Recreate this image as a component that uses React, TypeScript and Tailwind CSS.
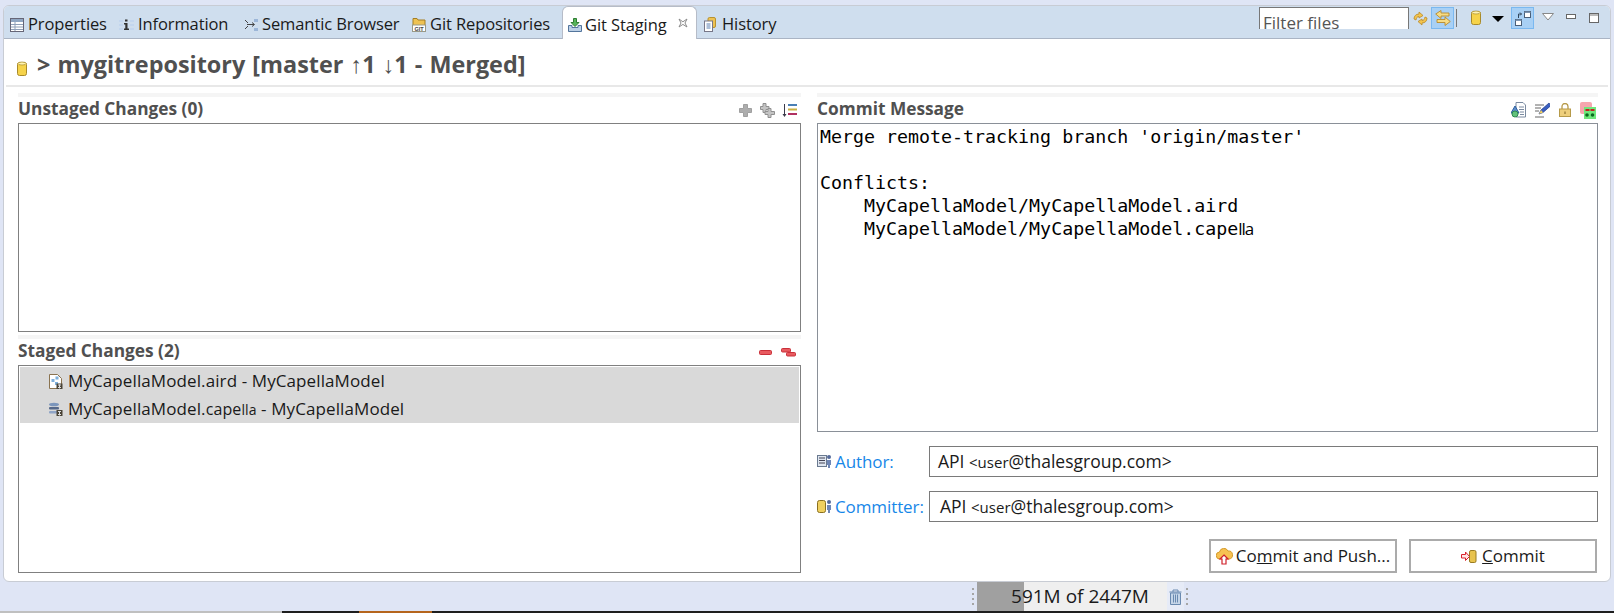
import type { ReactNode } from 'react';

const UI_FONT = "font-['Open_Sans','Noto_Sans',sans-serif]";

function Svg({ w = 16, h = 16, children }: { w?: number; h?: number; children: ReactNode }) {
  return (
    <svg width={w} height={h} viewBox={`0 0 ${w} ${h}`} className="shrink-0">
      {children}
    </svg>
  );
}

function Cylinder({ w = 10, h = 15 }: { w?: number; h?: number }) {
  return (
    <Svg w={w} h={h}>
      <rect x="0.5" y="1.5" width={w - 1} height={h - 2} rx="2" fill="#f6d34a" stroke="#a88a2a" />
      <ellipse cx={w / 2} cy="2.5" rx={w / 2 - 1} ry="1.5" fill="#fff3b0" stroke="#a88a2a" strokeWidth="0.7" />
    </Svg>
  );
}

const PropertiesIcon = () => (
  <Svg w={14} h={14}>
    <rect x="0.5" y="0.5" width="13" height="13" fill="#fff" stroke="#667" />
    <rect x="1" y="1" width="12" height="3" fill="#8fa6c2" />
    <path d="M1 6.500h12M1 9h12M1 11.500h12M5 4v9" stroke="#8fa0b8" />
  </Svg>
);

const InfoIcon = () => (
  <Svg w={15} h={14}>
    <path d="M0 3h4M0 7h4M0 11h4M11 3h4M11 7h4M11 11h4" stroke="#c3d6ee" strokeWidth="2" />
    <path d="M6 1.500h2.500v2H6zM5 5h3.500v5.500H10V12H5v-1.500h1.300V6.500H5z" fill="#333" />
  </Svg>
);

const SemanticIcon = () => (
  <Svg w={14} h={14}>
    <path d="M1 2l3 3M1 11l3-3M3 6.500h7M8 4.500l2.500 2-2.500 2" stroke="#444" fill="none" />
    <rect x="10" y="1" width="4" height="3" fill="#9cb6d8" />
    <rect x="10" y="10" width="4" height="3" fill="#9cb6d8" />
  </Svg>
);

const GitRepoIcon = () => (
  <Svg w={14} h={15}>
    <path d="M1 4V1.500h4L6 3h7v6H1z" fill="#eec253" stroke="#a47e24" />
    <rect x="0.500" y="8" width="13" height="6.500" fill="#fff" stroke="#998" />
    <text x="7" y="13.500" textAnchor="middle" fontSize="5.500" fontWeight="700" fill="#444" fontFamily="Liberation Sans">GIT</text>
  </Svg>
);

const StagingIcon = () => (
  <Svg w={14} h={14}>
    <path d="M0.500 7.500h3.500v2h6v-2h3.500v6H0.500z" fill="#bcd0e6" stroke="#53759c" />
    <path d="M5.500 0.500h3v4h2.500L7 8.500 3 4.500h2.500z" fill="#57b45a" stroke="#2e7d32" />
  </Svg>
);

const HistoryIcon = () => (
  <Svg w={12} h={15}>
    <rect x="4" y="0.500" width="7.500" height="10" rx="1.500" fill="#eec253" stroke="#b8932f" />
    <rect x="0.500" y="4" width="8" height="10.500" fill="#fff" stroke="#778" />
    <path d="M2.500 7h4M2.500 9h4M2.500 11h4" stroke="#5a7fb0" />
  </Svg>
);

const CloseIcon = () => (
  <Svg w={10} h={10}>
    <path d="M1 1l3.900 2.800L9 1 7 5l2 4-4.100-2.600L1 9l2-4z" fill="#fff" stroke="#8a8a8a" />
  </Svg>
);

const SyncIcon = () => (
  <Svg w={15} h={15}>
    <path d="M1 8c0-3 2-5 5-5V1l4 3.500L6 7V5.500C4 5.500 3.500 7 3 9z" fill="#f3c44e" stroke="#b98a2a" strokeWidth="0.800" />
    <path d="M14 7c0 3-2 5-5 5v2l-4-3.500L9 8v1.500c2 0 2.500-1.500 3-3.500z" fill="#f3c44e" stroke="#b98a2a" strokeWidth="0.800" />
  </Svg>
);

const LinkIcon = () => (
  <Svg w={16} h={16}>
    <path d="M14 6H6v2.500L0.700 4 6 0.500V3h8z" fill="#f6dc85" stroke="#b98a2a" strokeWidth="0.900" />
    <path d="M2 9.500h8V7l5.300 4.500L10 15.500V12.500H2z" fill="#f6dc85" stroke="#b98a2a" strokeWidth="0.900" />
  </Svg>
);

const LayoutIcon = () => (
  <Svg w={16} h={15}>
    <rect x="0.500" y="8.500" width="6" height="6" fill="#fff" stroke="#4a5f78" />
    <rect x="0.500" y="8.500" width="6" height="1.500" fill="#7c95b2" />
    <rect x="9.500" y="0.500" width="6" height="6" fill="#fff" stroke="#4a5f78" />
    <rect x="9.500" y="0.500" width="6" height="1.500" fill="#7c95b2" />
    <path d="M3.500 7V3h3M5 1.500L6.500 3 5 4.500" stroke="#33475c" fill="none" />
  </Svg>
);

const PlusIcon = () => (
  <Svg w={13} h={13}>
    <path d="M4.500 0.500h4v4h4v4h-4v4h-4v-4h-4v-4h4z" fill="#adadad" stroke="#a0a0a0" />
  </Svg>
);

const PlusAllIcon = () => (
  <Svg w={15} h={15}>
    <path d="M3 0.500h3v3h3v3H6v3H3v-3H0.500v-3H3z" fill="#c4c4c4" stroke="#909090" />
    <path d="M8 5.500h3v3h3.500v3H11v3H8v-3H5v-3h3z" fill="#c4c4c4" stroke="#909090" />
  </Svg>
);

const SortIcon = () => (
  <Svg w={16} h={15}>
    <path d="M2.500 1v11" stroke="#3a3a4a" />
    <path d="M0.500 11h4L2.500 14z" fill="#3a3a4a" />
    <path d="M6 2h9" stroke="#4a7fb5" strokeWidth="2" />
    <path d="M6 6.500h9" stroke="#c9b144" strokeWidth="2" />
    <path d="M6 11h9" stroke="#b03060" strokeWidth="2" />
  </Svg>
);

const MinusIcon = () => (
  <Svg w={13} h={5}>
    <rect x="0.500" y="0.500" width="12" height="4" rx="1" fill="#e85a5f" stroke="#c9303a" />
  </Svg>
);

const MinusAllIcon = () => (
  <Svg w={15} h={9}>
    <rect x="0.500" y="0.500" width="9" height="3.500" rx="1" fill="#e85a5f" stroke="#c9303a" />
    <rect x="5.500" y="4.500" width="9" height="3.500" rx="1" fill="#e85a5f" stroke="#c9303a" />
  </Svg>
);

const AmendIcon = () => (
  <Svg w={15} h={16}>
    <path d="M5 0.500h7l2.500 2.500v12H5z" fill="#fff" stroke="#7a8aa0" />
    <path d="M8 5h5M8 7.500h5M9 10h4M9 12.500h4" stroke="#7a8aa0" />
    <path d="M4 4l4 7H0z" fill="#5d8ccc" stroke="#2c5f9e" />
    <circle cx="4" cy="12" r="3" fill="#63c27c" stroke="#2e8a50" />
  </Svg>
);

const PenIcon = () => (
  <Svg w={16} h={16}>
    <path d="M1 3h9M1 6h6M1 9h4M1 15h9" stroke="#666" />
    <path d="M15 1l-8 7-2 4 4-1.500 8-7z" fill="#3a5fc0" stroke="#1d3a8a" strokeWidth="0.700" />
    <path d="M7 8l-2 4 4-1.500z" fill="#f2d060" />
  </Svg>
);

const LockIcon = () => (
  <Svg w={12} h={14}>
    <path d="M3 6V3.500a3 3 0 0 1 6 0V6" fill="none" stroke="#b69a4a" strokeWidth="1.300" />
    <rect x="0.500" y="6" width="11" height="7.500" fill="#eecf7c" stroke="#b69a4a" />
    <rect x="5.500" y="8.500" width="1" height="2.500" fill="#7a6120" />
  </Svg>
);

const SignIcon = () => (
  <Svg w={17} h={17}>
    <rect x="0" y="0" width="12" height="12" rx="2" fill="#f6a6ae" />
    <rect x="4" y="5" width="12" height="12" fill="#6fe87c" />
    <path d="M5.500 8h4M10.500 8h4" stroke="#c81e1e" strokeWidth="2" />
    <circle cx="7" cy="13" r="1.800" fill="#0b6b1f" />
    <circle cx="12.500" cy="13" r="1.800" fill="#0b6b1f" />
  </Svg>
);

const AirdIcon = () => (
  <Svg w={14} h={15}>
    <path d="M0.500 0.500h8l4 4v10H0.500z" fill="#fff" stroke="#8a7350" />
    <rect x="2.500" y="5" width="3" height="3" fill="#7fb0dc" />
    <rect x="6.500" y="2.500" width="3" height="3" fill="#7fb0dc" />
    <rect x="6" y="8" width="3" height="3" fill="#7fb0dc" />
    <rect x="7.500" y="9.500" width="6" height="5.500" fill="#4a4438" />
    <path d="M9 11h3M9 13.500h3M10.500 10.500v4" stroke="#ddd" />
  </Svg>
);

const CapellaIcon = () => (
  <Svg w={14} h={14}>
    <ellipse cx="5" cy="2.500" rx="5" ry="1.800" fill="#7c96bc" />
    <rect x="0" y="5" width="10" height="2.500" rx="1" fill="#55688a" />
    <rect x="0" y="9" width="10" height="2.500" rx="1" fill="#8fa4c6" />
    <rect x="7.500" y="8" width="6" height="6" fill="#4a4438" />
    <path d="M9 9.500h3M9 12.500h3M10.500 9v4.500" stroke="#ddd" />
  </Svg>
);

const AuthorIcon = () => (
  <Svg w={15} h={15}>
    <rect x="0.500" y="1.500" width="9" height="11" fill="#dfe6f0" stroke="#6a7a90" />
    <path d="M2 4h6M2 6.500h6M2 9h6" stroke="#445" />
    <circle cx="12" cy="3" r="2" fill="#556a9a" />
    <path d="M10 6h4v5h-1v3h-2v-3h-1z" fill="#6f86b5" />
  </Svg>
);

const CommitterIcon = () => (
  <Svg w={15} h={15}>
    <rect x="0.500" y="1.500" width="8" height="12" rx="2" fill="#f0d060" stroke="#8a7020" />
    <circle cx="12" cy="3" r="2" fill="#556a9a" />
    <path d="M10 6h4v5h-1v3h-2v-3h-1z" fill="#6f86b5" />
  </Svg>
);

const PushIcon = () => (
  <Svg w={17} h={17}>
    <path d="M4 11a3.500 3.500 0 0 1-.5-7 4.500 4.500 0 0 1 8.500-1 4 4 0 0 1 1 8z" fill="#f7c152" stroke="#d49a2a" />
    <path d="M8 7l4 4H10v5H6v-5H4z" fill="#fff" stroke="#d0202a" strokeWidth="1.200" />
  </Svg>
);

const CommitIcon = () => (
  <Svg w={16} h={13}>
    <rect x="8.500" y="0.500" width="6.500" height="12" rx="1.500" fill="#e8c34e" stroke="#9a7c22" />
    <path d="M0.500 4.500h4V2l4 4.500-4 4V8h-4z" fill="#ffe5e5" stroke="#d8202a" />
  </Svg>
);

const TrashIcon = () => (
  <Svg w={13} h={16}>
    <path d="M0.500 3h12M4 3V1h5v2" stroke="#6a8ab0" fill="none" />
    <path d="M1.500 4h10v11.500h-10z" fill="#c5d5e8" stroke="#6a8ab0" />
    <path d="M4.500 5.500v8M6.500 5.500v8M8.500 5.500v8" stroke="#6a8ab0" />
  </Svg>
);

function Tab({ icon, label, className = '' }: { icon: ReactNode; label: string; className?: string }) {
  return (
    <div className={`mt-[5px] flex items-center ${className}`}>
      {icon}
      <span className="ml-[4px]">{label}</span>
    </div>
  );
}

function Grip() {
  return (
    <div className="flex flex-col gap-[3px] w-[2px] self-center">
      <span className="h-[2px] bg-[#a5a5a5]" />
      <span className="h-[2px] bg-[#a5a5a5]" />
      <span className="h-[2px] bg-[#a5a5a5]" />
      <span className="h-[2px] bg-[#a5a5a5]" />
    </div>
  );
}

function SectionHeader({ title, children }: { title: string; children: ReactNode }) {
  return (
    <div className="flex h-[30px] items-center justify-between border-t-4 border-[#f5f5f5]">
      <span className="mb-[3px] text-[17.300px] font-bold text-[#505050]">{title}</span>
      <div className="flex items-center">{children}</div>
    </div>
  );
}

function PersonField({ icon, label, value, inset }: { icon: ReactNode; label: string; value: ReactNode; inset: string }) {
  return (
    <div className="flex h-[31px] items-center">
      <div className="flex w-[112px] items-center gap-[3px]">
        {icon}
        <span className="text-[#1787e8] text-[17px] tracking-[-0.1px]">{label}</span>
      </div>
      <div className={`flex h-full flex-1 items-center border border-[#7a7a7a] ${inset}`}>{value}</div>
    </div>
  );
}

const Identity = () => (
  <span className="whitespace-pre text-[17.500px]">
    API <span className="text-[15px]">&lt;user</span>@thalesgroup.com&gt;
  </span>
);

export default function App() {
  return (
    <div className={`flex h-[613px] w-[1614px] flex-col overflow-hidden bg-[#dfe5f5] text-[#1a1a1a] ${UI_FONT}`}>
      <div className="mx-[3px] mt-[5px] flex h-[577px] flex-col overflow-hidden rounded-[6px] border border-[#c8ccd4] bg-white">
        {/* tab strip */}
        <div className="flex h-[33px] items-center justify-between border-b border-[#aab4c4] bg-[#cfdeee] text-[16.500px] tracking-[-0.1px]">
          <div className="flex h-full items-center pl-[6px]">
            <Tab icon={<PropertiesIcon />} label="Properties" className="w-[109px]" />
            <Tab icon={<InfoIcon />} label="Information" className="w-[125px]" />
            <Tab icon={<SemanticIcon />} label="Semantic Browser" className="w-[168px]" />
            <Tab icon={<GitRepoIcon />} label="Git Repositories" className="w-[150px]" />
            <div className="flex h-[33px] w-[135px] items-center gap-[3px] rounded-t-[6px] border-x border-t border-[#b6bcc8] bg-white pl-[5px] pt-[5px]">
              <StagingIcon />
              <span>Git Staging</span>
              <span className="ml-[8px] mb-[5px]"><CloseIcon /></span>
            </div>
            <div className="ml-[7px] mt-[5px] flex items-center gap-[6px]">
              <HistoryIcon />
              <span>History</span>
            </div>
          </div>
          <div className="flex h-full items-start pt-[1px]">
            <div className="h-[22px] w-[150px] overflow-hidden border border-b-0 border-[#777] bg-white pl-[3px] pt-[3px] text-[17px] leading-[24px] tracking-normal text-[#555]">
              Filter files
            </div>
            <div className="ml-[4px] mt-[4px]"><SyncIcon /></div>
            <div className="ml-[3px] flex h-[22px] w-[23px] items-center justify-center border border-[#7ab8f0] bg-[#a8d0f5]"><LinkIcon /></div>
            <div className="ml-[2px] mt-[2px] h-[18px] w-px bg-[#777]" />
            <div className="ml-[14px] mt-[3px]"><Cylinder /></div>
            <div className="ml-[11px] mt-[9px] h-0 w-0 border-x-[6px] border-t-[6px] border-x-transparent border-t-black" />
            <div className="ml-[7px] flex h-[22px] w-[23px] items-center justify-center border border-[#7ab8f0] bg-[#a8d0f5]"><LayoutIcon /></div>
            <svg width="12" height="8" viewBox="0 0 12 8" className="ml-[8px] mt-[6px]"><path d="M0.500 0.500h11L6 7z" fill="#fff" stroke="#888" /></svg>
            <div className="ml-[12px] mt-[7px] h-[5px] w-[10px] border border-[#666] bg-white" />
            <div className="ml-[13px] mr-[11px] mt-[6px] h-[10px] w-[10px] border border-[#666] bg-white">
              <div className="h-[2px] bg-[#bbb]" />
            </div>
          </div>
        </div>

        {/* repository title */}
        <div className="mx-[2px] flex h-[48px] items-center gap-[10px] border-b-2 border-[#e8e8e8] pl-[11px] pt-[5px] text-[23.400px] font-bold text-[#505050]">
          <span className="mt-[8px]"><Cylinder /></span>
          <span className="[word-spacing:1px]">&gt; mygitrepository [master ↑1 ↓1 - Merged]</span>
        </div>

        {/* staging columns */}
        <div className="flex flex-1 gap-[16px] pl-[14px] pr-[12px] pt-[6px]">
          <div className="flex w-[783px] flex-col">
            <SectionHeader title="Unstaged Changes (0)">
              <span className="mr-[8px]"><PlusIcon /></span>
              <span className="mr-[7px]"><PlusAllIcon /></span>
              <span className="mr-[3px]"><SortIcon /></span>
            </SectionHeader>
            <div className="h-[209px] border border-[#808080]" />
            <div className="mt-[3px]">
              <SectionHeader title="Staged Changes (2)">
                <span className="mr-[9px]"><MinusIcon /></span>
                <span className="mr-[5px]"><MinusAllIcon /></span>
              </SectionHeader>
            </div>
            <div className="h-[208px] border border-[#808080] p-px text-[17px] tracking-[0.1px]">
              <div className="flex h-[28px] items-center gap-[5px] bg-[#d9d9d9] pl-[29px]">
                <AirdIcon />
                <span>MyCapellaModel.aird - MyCapellaModel</span>
              </div>
              <div className="flex h-[28px] items-center gap-[5px] bg-[#d9d9d9] pl-[29px]">
                <CapellaIcon />
                <span className="whitespace-pre">MyCapellaModel.<span className="text-[16px]">cape</span><span className="text-[14px]">lla</span> - MyCapellaModel</span>
              </div>
            </div>
          </div>

          <div className="flex w-[781px] flex-col">
            <SectionHeader title="Commit Message">
              <span className="mr-[8px]"><AmendIcon /></span>
              <span className="mr-[9px]"><PenIcon /></span>
              <span className="mr-[9px]"><LockIcon /></span>
              <span className="mr-px"><SignIcon /></span>
            </SectionHeader>
            <div className="flex h-[309px] flex-col border border-[#8a9098] pl-[2px] pt-px font-['DejaVu_Sans_Mono',monospace] text-[18.300px] leading-[23px] text-black">
              <p className="whitespace-pre">Merge remote-tracking branch 'origin/master'</p>
              <p className="h-[23px]" />
              <p className="whitespace-pre">Conflicts:</p>
              <p className="whitespace-pre">    MyCapellaModel/MyCapellaModel.aird</p>
              <p className="whitespace-pre">
                {'    MyCapellaModel/MyCapellaModel.cape'}
                <span className="font-['Open_Sans',sans-serif] text-[17px] tracking-[-1px]">lla</span>
              </p>
            </div>
            <div className="mt-[14px] flex flex-col gap-[14px]">
              <PersonField icon={<AuthorIcon />} label="Author:" value={<Identity />} inset="pl-[8px]" />
              <PersonField icon={<CommitterIcon />} label="Committer:" value={<Identity />} inset="pl-[10px]" />
            </div>
            <div className="mr-px mt-[17px] flex justify-end gap-[12px] text-[17px]">
              <button className="flex h-[34px] w-[188px] items-center justify-center gap-[3px] border-2 border-[#ababab] bg-white">
                <PushIcon />
                <span>Co<u>m</u>mit and Push...</span>
              </button>
              <button className="flex h-[34px] w-[188px] items-center justify-center gap-[5px] border-2 border-[#ababab] bg-white">
                <CommitIcon />
                <span><u>C</u>ommit</span>
              </button>
            </div>
          </div>
        </div>
      </div>

      {/* status line */}
      <div className="flex h-[29px] items-stretch pl-[972px] text-[19px]">
        <Grip />
        <div className="relative ml-[3px] flex w-[190px] items-center justify-center bg-[#efefef] pl-[16px]">
          <div className="absolute inset-y-0 left-0 w-[47px] bg-[#a0a0a0]" />
          <span className="relative">591M of 2447M</span>
        </div>
        <div className="flex w-[17px] items-center justify-center bg-[#e6ebf7]"><TrashIcon /></div>
        <div className="ml-[2px] flex"><Grip /></div>
      </div>
      <div className="flex h-[2px]">
        <div className="w-[282px] bg-[#c0c0c0]" />
        <div className="w-[77px] bg-[#1e1e1e]" />
        <div className="w-[73px] bg-[#b5651d]" />
        <div className="flex-1 bg-[#1e1e1e]" />
      </div>
    </div>
  );
}
